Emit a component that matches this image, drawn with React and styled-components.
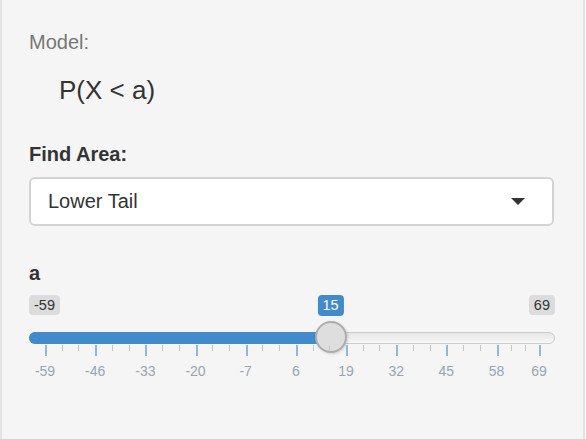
import React from "react";
import styled, { createGlobalStyle } from "styled-components";

const MIN = -59;
const MAX = 69;
const VALUE = 15;
const STEP = 13;
const EDGE = 16;
const SPAN = 494;

// x position of a value along the slider, in px from the track's left edge
const pos = (v) => EDGE + ((v - MIN) / (MAX - MIN)) * SPAN;

const majors = [];
for (let v = MIN; v < MAX; v += STEP) majors.push(v);
majors.push(MAX);

const minors = [];
majors.slice(0, -1).forEach((v, i) => {
  const a = pos(v);
  const b = pos(majors[i + 1]);
  minors.push(a + (b - a) / 3, a + ((b - a) * 2) / 3);
});

const App = () => {
  return (
    <>
      <GlobalStyle />
      <Well>
        <ModelLabel>Model:</ModelLabel>
        <Formula>P(X &lt; a)</Formula>

        <FieldLabel>Find Area:</FieldLabel>
        <Select>
          <span>Lower Tail</span>
          <Caret />
        </Select>

        <FieldLabel>a</FieldLabel>
        <Slider>
          <EndLabels>
            <Badge>{MIN}</Badge>
            <ValueBadge style={{ left: pos(VALUE) }}>{VALUE}</ValueBadge>
            <Badge>{MAX}</Badge>
          </EndLabels>
          <Track>
            <Fill style={{ width: pos(VALUE) }} />
            <Handle style={{ left: pos(VALUE) - 16 }} />
          </Track>
          <Grid>
            {minors.map((x, i) => (
              <Tick key={"m" + i} style={{ left: Math.round(x) }} />
            ))}
            {majors.map((v) => (
              <React.Fragment key={v}>
                <Tick $major style={{ left: Math.round(pos(v)) }} />
                <GridText style={{ left: pos(v) }}>{v}</GridText>
              </React.Fragment>
            ))}
          </Grid>
        </Slider>
      </Well>
    </>
  );
};

export default App;

const GlobalStyle = createGlobalStyle`
  body {
    margin: 0;
    background: #fff;
    font-family: "Liberation Sans", Arial, sans-serif;
    color: #333;
  }
`;

const Well = styled.div`
  box-sizing: border-box;
  width: 585px;
  height: 439px;
  padding: 28px 28px 0 27px;
  display: flex;
  flex-direction: column;
  background: #f5f5f5;
  border-left: 2px solid #e3e3e3;
  border-right: 2px solid #e3e3e3;
`;

const ModelLabel = styled.div`
  font-size: 20px;
  line-height: 28px;
  color: #777;
`;

const Formula = styled.div`
  margin: 17px 0 0 30px;
  font-size: 26px;
  line-height: 34px;
  color: #333;
`;

const FieldLabel = styled.div`
  margin-top: 33px;
  font-size: 20px;
  line-height: 28px;
  font-weight: bold;
  color: #333;
`;

const Select = styled.div`
  box-sizing: border-box;
  margin: 9px 1px 0 0;
  height: 49px;
  padding: 0 27px 0 17px;
  display: flex;
  align-items: center;
  justify-content: space-between;
  background: #fff;
  border: 2px solid #d3d3d3;
  border-radius: 6px;
  font-size: 20px;
  color: #333;
`;

const Caret = styled.span`
  width: 0;
  height: 0;
  border-left: 7px solid transparent;
  border-right: 7px solid transparent;
  border-top: 7px solid #333;
`;

const Slider = styled.div`
  margin-top: 8px;
  display: flex;
  flex-direction: column;
`;

const EndLabels = styled.div`
  position: relative;
  display: flex;
  justify-content: space-between;
  height: 20px;
`;

const Badge = styled.span`
  padding: 0 5px;
  line-height: 20px;
  font-size: 14.5px;
  color: #333;
  background: rgba(0, 0, 0, 0.1);
  border-radius: 4px;
`;

const ValueBadge = styled(Badge)`
  position: absolute;
  top: 0;
  transform: translateX(-50%);
  padding: 0 5px;
  line-height: 21px;
  color: #fff;
  background: #428bca;
`;

const Track = styled.div`
  position: relative;
  margin-top: 17px;
  box-sizing: border-box;
  height: 12px;
  background: linear-gradient(#e6e6e6, #f8f8f8);
  border: 1px solid #cccccc;
  border-radius: 6px;
`;

const Fill = styled.div`
  position: absolute;
  top: -1px;
  left: -1px;
  height: 12px;
  background: #428bca;
  border-radius: 6px 0 0 6px;
`;

const Handle = styled.div`
  position: absolute;
  top: -12px;
  margin-left: -1px;
  box-sizing: border-box;
  width: 32px;
  height: 32px;
  background: #dedede;
  border: 2px solid #adadad;
  border-radius: 50%;
  box-shadow: 1px 1px 3px rgba(0, 0, 0, 0.15);
`;

const Grid = styled.div`
  position: relative;
  margin-top: 1px;
  height: 40px;
`;

const Tick = styled.div`
  position: absolute;
  top: 0;
  width: ${({ $major }) => ($major ? 2 : 1)}px;
  height: ${({ $major }) => ($major ? 11 : 6)}px;
  background: ${({ $major }) => ($major ? "#92b8dc" : "#c6c6c6")};
`;

const GridText = styled.div`
  position: absolute;
  top: 18px;
  transform: translateX(-50%);
  font-size: 14px;
  line-height: 16px;
  color: #99a4b3;
  white-space: nowrap;
`;
